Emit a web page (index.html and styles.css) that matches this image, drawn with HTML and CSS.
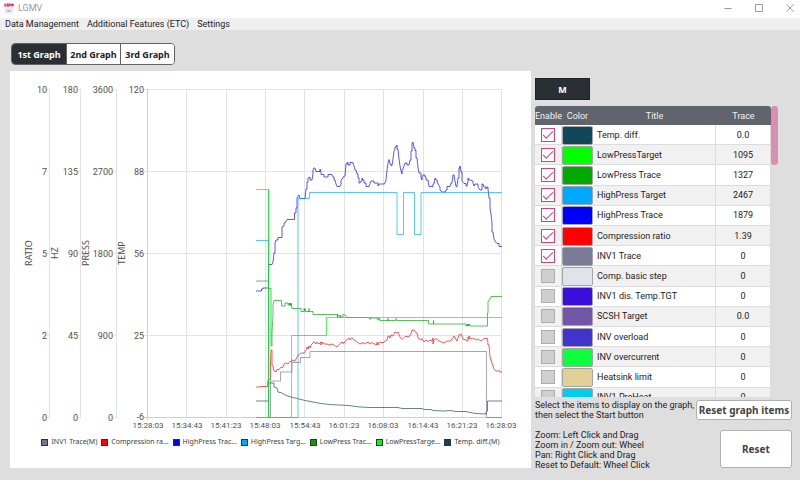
FILE: index.html
```html
<!DOCTYPE html>
<html lang="en">
<head>
<meta charset="utf-8">
<meta name="viewport" content="width=device-width, initial-scale=1">
<title>LGMV</title>
<link rel="stylesheet" href="styles.css">
</head>
<body>
<header class="titlebar">
  <svg class="logo" width="10" height="12" viewBox="0 0 10 12" aria-hidden="true">
    <rect x="0.5" y="0.5" width="9" height="11" rx="2" fill="#ececec"/>
    <rect y="1" width="10" height="4" fill="#f6c3d2"/>
    <path d="M1 2v2h1M4.500 2H3v2h1.500V3M5.500 4V2l1 1 .8-1v2M8.200 2l.5 2 .6-2" fill="none" stroke="#d1195b" stroke-width=".9"/>
    <path d="M3 9h4" stroke="#999"/>
  </svg>
  <span class="app-name">LGMV</span>
  <div class="window-buttons">
    <button type="button" aria-label="Minimize"><svg width="8" height="8" viewBox="0 0 8 8"><path d="M0.500 4.500h7"/></svg></button>
    <button type="button" aria-label="Maximize"><svg width="8" height="8" viewBox="0 0 8 8"><path d="M.5.500h7v7h-7z"/></svg></button>
    <button type="button" aria-label="Close"><svg width="8" height="8" viewBox="0 0 8 8"><path d="M.5.500l7 7m0-7l-7 7"/></svg></button>
  </div>
</header>
<nav class="menubar">
  <a href="#data">Data Management</a>
  <a href="#features">Additional Features (ETC)</a>
  <a href="#settings">Settings</a>
</nav>
<main class="workspace">
  <section class="graph-column">
    <div class="tabs">
      <button type="button" class="tab active">1st Graph</button>
      <button type="button" class="tab">2nd Graph</button>
      <button type="button" class="tab">3rd Graph</button>
    </div>
    <div class="chart-panel">
      <svg class="chart" viewBox="10 71 521 363">
        <g class="grid">
          <path d="M186.500 89V417M226.500 89V417M265.500 89V417M304.500 89V417M344.500 89V417M383.500 89V417M423.500 89V417M462.500 89V417M501.500 89V417"/>
          <path d="M144 89.500H502M144 171.500H502M144 253.500H502M144 335.500H502"/>
          <path d="M49.500 89V417M47 89.500h3M47 171.500h3M47 253.500h3M47 335.500h3M47 417.500h3"/>
          <path d="M80.500 89V417M78 89.500h3M78 171.500h3M78 253.500h3M78 335.500h3M78 417.500h3"/>
          <path d="M116.500 89V417M114 89.500h3M114 171.500h3M114 253.500h3M114 335.500h3M114 417.500h3"/>
          <path class="axis" d="M147.500 89V420M144 417.500H502"/>
        </g>
        <g class="ticks-y">
          <text x="47" y="93">10</text><text x="47" y="175">7</text><text x="47" y="257">5</text><text x="47" y="339">2</text><text x="47" y="421">0</text>
          <text x="78" y="93">180</text><text x="78" y="175">135</text><text x="78" y="257">90</text><text x="78" y="339">45</text><text x="78" y="421">0</text>
          <text x="113" y="93">3600</text><text x="113" y="175">2700</text><text x="113" y="257">1800</text><text x="113" y="339">900</text><text x="113" y="421">0</text>
          <text x="144" y="93">120</text><text x="144" y="175">88</text><text x="144" y="257">56</text><text x="144" y="339">25</text><text x="144" y="420">-6</text>
        </g>
        <g class="axis-names">
          <text transform="translate(32 253) rotate(-90)">RATIO</text>
          <text transform="translate(58 253) rotate(-90)">HZ</text>
          <text transform="translate(89 253) rotate(-90)">PRESS</text>
          <text transform="translate(125 253) rotate(-90)">TEMP</text>
        </g>
        <g class="ticks-x">
          <text x="148" y="428">15:28:03</text><text x="187" y="428">15:34:43</text><text x="226" y="428">15:41:23</text><text x="265" y="428">15:48:03</text><text x="305" y="428">15:54:43</text><text x="344" y="428">16:01:23</text><text x="383" y="428">16:08:03</text><text x="423" y="428">16:14:43</text><text x="462" y="428">16:21:23</text><text x="501" y="428">16:28:03</text>
        </g>
        <g class="traces">
          <path stroke="#74748f" d="M256 417.500H270.500V381H280.500V372H292V362.500H300.500V357.500H310V351.500H486.500V417.500H502"/>
          <path stroke="#0f4458" d="M256 401H268.500V383H274V387L277 388L278 392L282 393L285 395L291 397L297 398.500L305 400.500L313 402L321 403.500L330 404.500L348 405.500L360 407L370 407.500H398L402 408.500H422L424 409.500H431L433 410.500L444 411L450 410.500L456 411.500H466L470 412.500L476 413.500L486 414V412L487.500 411V401H502"/>
          <path stroke="#f00" d="M256 387H261V386.500H267.500L268 379.500H270.500V361L271 350L272 350V365L273 366L274 371L276 372L277 369.500H279L281 367L283 367.500L284 364L286 363L288 364L290 361.500H292V360H293L294 361H295L297 357L298 356L300 353.500L302 353H304L306 350L307 347L308 349L309 346L310 348L311 345L313 343L314 341.500L316 344L317 342L319 344L321 342V345L322 342L324 344H327L329 345L332 344L334 345L337 347L339 345L341 342.500H343V343.500L345 342L347 339L350 338.500V340L352 337.500L354 340L356 341L358 343L360 344L363 342.500L364 344L367 342.500H369L370 344L372 342.500L374 344L377 344.500V342L378 345L379 342.500H384L385 341L387 340L388 336H389L390 338L391 335L393 336L395 332L397 333L398 332L400 337L402 339.500L405 336.500H409L411 334L412 330L414 330L415 332L417 333L418 338L421 340L422 338.500L424 342L426 340L428 341.500L430 340L432 341L433 338V344L434 340L436 338.500L439 341L444 343L447 341L450 341L453 338L454 336L457 341L459 335L461 334L463 339L466 340L468 341V337L469 339V336L471 339L473 338L476 340L478 339L481 341L484 338.500H487.500L488 345H489L490 357L492 363L494 369L496 371L500 371V372H502"/>
          <path stroke="#00f" d="M256 291H261.500V289H263V288H268.500V264.500H272L273 262L274 253H275V243L276 240H278V237.500H282V227L284 226V223H285L286 221L287 219.500H294.500V213H296V208H297V198L299 195L300 198.500H305L306 189H307V182H308V178L310 177V180H312L313 173V170L314 168H315L316 171.500H320V169L321 172V174.500H324V177H328V174.500H332L333 177H334V180H335L336 184L337 186.500H340L341 184V180L343 178V177L345 176L346 164H347V162.500H348V165H350V162.500H353L354 166L355 170H356L357 174H358V178H359V183H360L361 181H362V178L363 180H364V183H366V186.500H369L370 183.500L371 181H374V183H378V186L379 184H384.500L386 180L387 170L388 163L389 159.500L390 164H391V165.500H392L393 159L394 151L395 149V147H396L397 145V149H398L399 159L400 166L401 171L402 174V171L403 169L404 166L405 163H407V165H409L410 160H411V151H412L412 143L413 142L414 148H415V150.500H416V158H417L418 168L419 173H421V178L422 180V177L423 175H425V177H426V180H428L429 186.500H433V184H434L435 178L436 180H437L438 184L440 187V190L442 192H445L446 190H447V186.500H450L451 183H452L453 175H454L455 181L456 186.500H457L458 178H459V168H460V166L461 172H462V181L464 183.500H466V186H467L468 181V178L469 180H471L472 181H473V183L474 186L475 184H478V187L480 190H482V184H483L484 187H486V189L487 187H488V189L489 198H490V208L491 214L492 223V232H493L494 239L495 241L497 243.500H499V246.500H502"/>
          <path stroke="#00a8ff" d="M256 240.500H268.500V417.500H298V198.500H309.500V192.500H397V234.500H403.500V192.500H414.500V234.500H421V192.500H502"/>
          <path stroke="#00a000" d="M256 281H268.500V288.500H271V345L272 346V333L273 315V305L274 300.500H281.500V306H285V303H288V305H289V303L290 305V303L291 306V303L292 308.500H301V311.500H304V308.500L305 311V308.500V311.500H309V308.500V311.500H313V314.500H337.500V317.500V314.500L340 317.500V315L341 317H343V314.500L345 315L347 317.500H369L370 319.500V318H376L378 318.500V320H379V318L380 320.500H388V318.500V320.500H396V318.500L397 320.500H428.500V324H433.500V320.500V324H466V326H467V324L468 326V324L469 326V324L470 326H487.500V313H488V301L490 299.500L491 296.500H502"/>
          <path stroke="#00f000" d="M256 189.500H268.500V417.500H291.500V335.500H326.500V317.500H502"/>
          <path stroke="#00e020" d="M268.500 189V417"/>
        </g>
      </svg>
      <ul class="legend">
        <li style="--c:#74748f">INV1 Trace(M)</li>
        <li style="--c:#ff0000">Compression ra…</li>
        <li style="--c:#0000ff">HighPress Trac…</li>
        <li style="--c:#00a8ff">HighPress Targ…</li>
        <li style="--c:#00a000">LowPress Trac…</li>
        <li style="--c:#00ff00">LowPressTarge…</li>
        <li style="--c:#0f4458">Temp. diff.(M)</li>
      </ul>
    </div>
  </section>
  <aside class="side">
    <button type="button" class="unit">M</button>
    <div class="list">
      <div class="list-view">
        <table>
          <thead><tr><th class="c-enable">Enable</th><th class="c-color">Color</th><th>Title</th><th class="c-trace">Trace</th></tr></thead>
          <tbody>
            <tr><td><input type="checkbox" id="i1" checked></td><td><span class="swatch" style="--c:#124659"></span></td><td><label for="i1">Temp. diff.</label></td><td>0.0</td></tr>
            <tr><td><input type="checkbox" id="i2" checked></td><td><span class="swatch" style="--c:#00ff00"></span></td><td><label for="i2">LowPressTarget</label></td><td>1095</td></tr>
            <tr><td><input type="checkbox" id="i3" checked></td><td><span class="swatch" style="--c:#00aa00"></span></td><td><label for="i3">LowPress Trace</label></td><td>1327</td></tr>
            <tr><td><input type="checkbox" id="i4" checked></td><td><span class="swatch" style="--c:#00a8ff"></span></td><td><label for="i4">HighPress Target</label></td><td>2467</td></tr>
            <tr><td><input type="checkbox" id="i5" checked></td><td><span class="swatch" style="--c:#0000ff"></span></td><td><label for="i5">HighPress Trace</label></td><td>1879</td></tr>
            <tr><td><input type="checkbox" id="i6" checked></td><td><span class="swatch" style="--c:#ff0000"></span></td><td><label for="i6">Compression ratio</label></td><td>1.39</td></tr>
            <tr><td><input type="checkbox" id="i7" checked></td><td><span class="swatch" style="--c:#7b7b98"></span></td><td><label for="i7">INV1 Trace</label></td><td>0</td></tr>
            <tr><td><input type="checkbox" id="i8"></td><td><span class="swatch" style="--c:#e0e4ea"></span></td><td><label for="i8">Comp. basic step</label></td><td>0</td></tr>
            <tr><td><input type="checkbox" id="i9"></td><td><span class="swatch" style="--c:#3a0edb"></span></td><td><label for="i9">INV1 dis. Temp.TGT</label></td><td>0</td></tr>
            <tr><td><input type="checkbox" id="i10"></td><td><span class="swatch" style="--c:#7056a4"></span></td><td><label for="i10">SCSH Target</label></td><td>0.0</td></tr>
            <tr><td><input type="checkbox" id="i11"></td><td><span class="swatch" style="--c:#4233cf"></span></td><td><label for="i11">INV overload</label></td><td>0</td></tr>
            <tr><td><input type="checkbox" id="i12"></td><td><span class="swatch" style="--c:#0cff3c"></span></td><td><label for="i12">INV overcurrent</label></td><td>0</td></tr>
            <tr><td><input type="checkbox" id="i13"></td><td><span class="swatch" style="--c:#e0d096"></span></td><td><label for="i13">Heatsink limit</label></td><td>0</td></tr>
            <tr><td><input type="checkbox" id="i14"></td><td><span class="swatch" style="--c:#00ceec"></span></td><td><label for="i14">INV1 PreHeat</label></td><td>0</td></tr>
          </tbody>
        </table>
      </div>
      <div class="thumb"></div>
    </div>
    <div class="help-row">
      <p>Select the items to display on the graph,<br>then select the Start button</p>
      <button type="button" class="btn reset-items">Reset graph items</button>
    </div>
    <div class="help-row zoom-help">
      <p>Zoom: Left Click and Drag<br>Zoom in / Zoom out: Wheel<br>Pan: Right Click and Drag<br>Reset to Default: Wheel Click</p>
      <button type="button" class="btn reset">Reset</button>
    </div>
  </aside>
</main>
</body>
</html>
```
FILE: styles.css
```css
* { box-sizing: border-box; }
body {
  margin: 0;
  min-height: 100vh;
  background: #dedede;
  color: #222;
  font: 9px/12px Roboto, "Noto Sans", sans-serif;
}
button { font: inherit; color: inherit; padding: 0; cursor: pointer; }
p { margin: 0; }

.titlebar { display: flex; align-items: center; height: 18px; padding: 0 6px 2px 4px; background: #fff; }
.app-name { margin-left: 4px; color: #999; }
.window-buttons { display: flex; gap: 23px; margin-left: auto; }
.window-buttons button { display: flex; width: 8px; height: 8px; border: 0; background: none; }
.window-buttons path { fill: none; stroke: #9a9a9a; }

.menubar { display: flex; gap: 8px; height: 12px; padding: 0 5px; background: #efefef; }
.menubar a { color: #222; text-decoration: none; }

.workspace { display: grid; grid-template-columns: minmax(0, 1fr) 257px; column-gap: 4px; padding: 13px 8px 12px 10px; }

.tabs { display: flex; width: max-content; margin: 0 0 6px 1px; border: 1px solid #5d6468; border-radius: 4px; overflow: hidden; background: #fff; }
.tab { width: 54px; height: 20px; border: 0; border-left: 1px solid #5d6468; background: #fff; font: 700 9px "Noto Sans", sans-serif; }
.tab:first-child { border-left: 0; }
.tab.active { background: #2a2f33; color: #fff; }

.chart-panel { background: #fff; padding-bottom: 20px; }
.chart { display: block; width: 100%; height: auto; font-size: 9px; }
.chart text { fill: #505050; }
.grid path { fill: none; stroke: #e3e3e3; }
.grid .axis { stroke: #cfcfcf; }
.ticks-y { text-anchor: end; }
.ticks-x, .axis-names { text-anchor: middle; }
.ticks-x { font-size: 8px; }
.axis-names { font-family: "Noto Sans", sans-serif; }
.traces path { fill: none; stroke-opacity: .65; }
.legend { display: flex; justify-content: center; gap: 4px; margin: 0; padding: 2px 0 0; list-style: none; font: 7px/12px "Noto Sans", sans-serif; color: #404040; white-space: nowrap; }
.legend li { display: flex; align-items: center; gap: 3px; }
.legend li::before { content: ""; width: 5px; height: 5px; border: 1px solid #333; background: var(--c); }

.side { padding-top: 35px; }
.unit { display: block; width: 55px; height: 22px; margin-bottom: 6px; border: 1px solid #222; background: #2a2f33; color: #fff; font: 700 9px "Noto Sans", sans-serif; }
.list { display: flex; }
.list-view { width: 236px; height: 291px; overflow: hidden; border-radius: 3px 3px 0 0; }
.thumb { width: 7px; height: 59px; border-radius: 3px; background: #d990b0; }
table { width: 100%; height: 302px; table-layout: fixed; border-collapse: separate; border-spacing: 0; }
th, td { padding: 0; text-align: center; vertical-align: middle; }
th { height: 19px; background: #60646d; color: #f2f2f2; font-weight: 400; }
.c-enable { width: 27px; }
.c-color { width: 31px; }
.c-trace { width: 55px; }
td { height: 20px; background: #fff; border-bottom: 1px solid #dcdcdc; border-right: 1px solid #dcdcdc; }
tr:nth-child(even) td { background: #f1f1f1; }
td:nth-child(2) { border: 0; }
td:nth-child(3) { text-align: left; padding-left: 4px; }
.swatch { display: block; height: 19px; border: 1px solid #a5a5a5; border-radius: 2px; background: var(--c); }
input { appearance: none; display: grid; place-items: center; width: 14px; height: 14px; margin: 0 auto; border: 1px solid #adadad; background: #cfcfcf; }
input:checked { border-color: #d63f78; background: #fff; }
input:checked::after { content: ""; width: 9px; height: 4px; margin-bottom: 2px; border: solid #d63f78; border-width: 0 0 1px 1px; transform: rotate(-45deg); }

.help-row { display: flex; justify-content: space-between; align-items: flex-start; padding-top: 3px; line-height: 10px; white-space: nowrap; }
.help-row p { width: 0; flex: 1; }
.zoom-help { padding-top: 10px; }
.btn { flex: none; border: 1px solid #b0b0b0; border-radius: 3px; background: #fff; color: #444; font: 700 10px "Noto Sans", sans-serif; }
.reset-items { width: 96px; height: 20px; }
.reset { width: 72px; height: 38px; }
```
